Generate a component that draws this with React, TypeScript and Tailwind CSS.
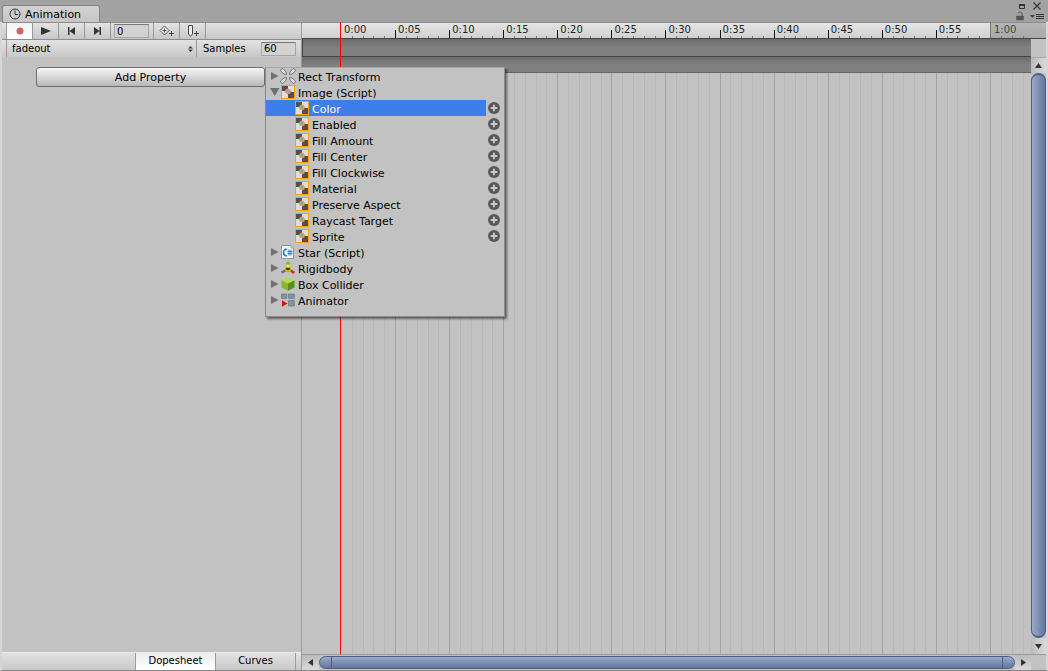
import React from "react";

const SEGMENTS = ["0:00", "0:05", "0:10", "0:15", "0:20", "0:25", "0:30", "0:35", "0:40", "0:45", "0:50", "0:55"];
const IMAGE_PROPERTIES = [
  "Color",
  "Enabled",
  "Fill Amount",
  "Fill Center",
  "Fill Clockwise",
  "Material",
  "Preserve Aspect",
  "Raycast Target",
  "Sprite",
];

const BAR = "bg-linear-to-b from-[#e2e2e2] to-[#c8c8c8]";

function ImageIcon() {
  return (
    <svg className="size-3.5 shrink-0" viewBox="0 0 14 14" aria-hidden="true">
      <path d="M0 0h14v14H0z" fill="#ffa00a" />
      <path d="M1 1h12v12H1z" fill="#dedede" />
      <path d="M1 1h6v5H1zM7 7h6v6H7z" fill="#505050" />
      <circle cx="7" cy="6.500" r="2.400" fill="#a0a0a0" stroke="#f5a01c" strokeWidth="1" />
      <path d="M3.600 6.500h1.200M9.200 6.500h1.200" stroke="#f5a01c" />
    </svg>
  );
}

function RectTransformIcon() {
  const petal = "M0 2.500C0 1 1 0 2.500 0L5.500 3.500 6 6 3.500 5.500Z";
  return (
    <svg className="-ml-px size-4 shrink-0" viewBox="0 0 16 16" fill="#dcdcdc" stroke="#707070" strokeWidth="0.900" aria-hidden="true">
      <path d={petal} transform="translate(.5 .5)" />
      <path d={petal} transform="translate(15.500 .5) scale(-1 1)" />
      <path d={petal} transform="translate(.5 15.500) scale(1 -1)" />
      <path d={petal} transform="translate(15.500 15.500) scale(-1 -1)" />
    </svg>
  );
}

function ScriptIcon() {
  return (
    <svg className="size-3.5 shrink-0" viewBox="0 0 14 14" aria-hidden="true">
      <path d="M.5.5h9.700L12.500 3v10.500H.5z" fill="#f2f5f7" stroke="#8a979f" />
      <path d="M10 .5V3h2.500" fill="#cfd8de" stroke="#8a979f" strokeWidth="0.7" />
      <path d="M6 4.600C3.600 3.600 2.600 5.500 2.600 7.500s1 3.900 3.400 3" fill="none" stroke="#1d7cc0" strokeWidth="1.600" />
      <path d="M8 4.500v6M10 4.500v6M6.500 6.500h5M6.500 8.700h5" fill="none" stroke="#1d7cc0" strokeWidth="0.900" />
    </svg>
  );
}

function RigidbodyIcon() {
  return (
    <svg className="size-3.5 shrink-0" viewBox="0 0 14 14" aria-hidden="true">
      <path d="M4 8.500 0 10.600l1.400 2L5.500 10z" fill="#2674c4" />
      <path d="m10 8.500 4 2.200-1.600 2.200L8.500 10z" fill="#df1f1f" />
      <path d="M5.500 4V2.800H4.600L7 .2l2.400 2.600h-.9V4z" fill="#76b82a" />
      <path d="m7 2.800 4 5.600L8.800 11.200H5.200L3 8.400z" fill="#cbbd00" />
      <path d="M7 5.500 9.700 8.200 7 9.200 4.300 8.200z" fill="#3c3700" />
      <path d="M5 5.500 7 3.300l2 2.200-2 1.500z" fill="#f6ef3d" />
    </svg>
  );
}

function BoxIcon() {
  return (
    <svg className="size-3.5 shrink-0" viewBox="0 0 14 14" aria-hidden="true">
      <path d="m7 .2 6.500 3L7 6.400.5 3.200z" fill="#b5da4e" />
      <path d="M.5 3.200 7 6.400v7.400L.5 10.400z" fill="#8ab62e" />
      <path d="M13.500 3.200 7 6.400v7.400l6.500-3.400z" fill="#5c8f17" />
    </svg>
  );
}

function AnimatorIcon() {
  return (
    <svg className="size-3.5 shrink-0" viewBox="0 0 14 14" aria-hidden="true">
      <g fill="#7f949f" stroke="#6b808c" strokeWidth="0.800">
        <path d="M.5 1h5.300v4.400H.5zM7.500 1h5.800v4.400H7.500zM7.500 7.500h5.800v5.500H7.500z" />
      </g>
      <path d="m1 7.300 5.500 3.200L1 13.700z" fill="#d01414" />
    </svg>
  );
}

function Foldout({ open = false }: { open?: boolean }) {
  return (
    <svg className="size-2.5 shrink-0" viewBox="0 0 10 10" fill="#707070" aria-hidden="true">
      {open ? <path d="M0 1h9.500L4.700 9z" /> : <path d="M1 1 8.500 5 1 9z" />}
    </svg>
  );
}

function TreeRow({ label, open, children }: { label: string; open?: boolean; children: React.ReactNode }) {
  return (
    <button type="button" aria-expanded={!!open} className="flex h-4 w-full items-center pl-1 text-left">
      <Foldout open={open} />
      <span className="flex w-[18px] shrink-0 pl-px">{children}</span>
      <span className="pt-1 whitespace-nowrap">{label}</span>
    </button>
  );
}

function PropertyMenu() {
  return (
    <div className="absolute top-0 left-full z-20 w-[240px] border border-[#8a8a8a] border-t-[#a8a8a8] bg-[#c2c2c2] pb-2 text-[11px] leading-4 shadow-[2px_2px_2px_#00000080]">
      <ul>
        <li>
          <TreeRow label="Rect Transform">
            <RectTransformIcon />
          </TreeRow>
        </li>
        <li>
          <TreeRow label="Image (Script)" open>
            <ImageIcon />
          </TreeRow>
          <ul>
            {IMAGE_PROPERTIES.map((name, i) => (
              <li key={name} className="flex items-center">
                <button
                  type="button"
                  className={`flex h-4 flex-1 items-center gap-[3px] pl-[29px] text-left ${i === 0 ? "bg-[#3d7eea] text-white" : ""}`}
                >
                  <ImageIcon />
                  <span className="pt-1">{name}</span>
                </button>
                <button type="button" aria-label={`Add ${name}`} className="flex h-4 w-[18px] items-center pl-0.5">
                  <svg className="size-3" viewBox="0 0 12 12" aria-hidden="true">
                    <circle cx="6" cy="6" r="6" fill="#585858" />
                    <path d="M6 2.700v6.600M2.700 6h6.600" stroke="#c8c8c8" strokeWidth="2" />
                  </svg>
                </button>
              </li>
            ))}
          </ul>
        </li>
        <li>
          <TreeRow label="Star (Script)">
            <ScriptIcon />
          </TreeRow>
        </li>
        <li>
          <TreeRow label="Rigidbody">
            <RigidbodyIcon />
          </TreeRow>
        </li>
        <li>
          <TreeRow label="Box Collider">
            <BoxIcon />
          </TreeRow>
        </li>
        <li>
          <TreeRow label="Animator">
            <AnimatorIcon />
          </TreeRow>
        </li>
      </ul>
    </div>
  );
}

function TitleBar() {
  return (
    <header className="flex h-[22px] shrink-0 items-end justify-between bg-[#a2a2a2] pr-1">
      <div className="ml-0.5 flex h-[17px] w-[98px] items-center gap-1 rounded-t-[3px] border border-b-0 border-[#858585] bg-linear-to-b from-[#d2d2d2] to-[#c6c6c6] pl-1.5 text-[11px]">
        <svg className="size-3 shrink-0" viewBox="0 0 12 12" fill="none" stroke="#333" aria-hidden="true">
          <circle cx="6" cy="6" r="5" />
          <path d="M6 2.500V6.500h3" />
        </svg>
        <h1 className="pt-0.5">Animation</h1>
      </div>
      <div className="flex flex-col items-end">
        <div className="flex items-center gap-[7px] pr-0.5">
          <button type="button" aria-label="Maximize">
            <svg className="block h-2.5 w-1.5" viewBox="0 0 6 10" aria-hidden="true">
              <path d="M.5 3.500h5v4h-5z" fill="none" stroke="#333" />
              <path d="M0 3h6v2H0z" fill="#333" />
            </svg>
          </button>
          <button type="button" aria-label="Close">
            <svg className="block size-2.5" viewBox="0 0 10 10" stroke="#333" strokeWidth="1.100" aria-hidden="true">
              <path d="m1.500 1.500 7 7M8.500 1.500l-7 7" />
            </svg>
          </button>
        </div>
        <div className="flex items-center gap-1.5 pb-px">
          <button type="button" aria-label="Lock">
            <svg className="block h-2.5 w-2" viewBox="0 0 8 10" aria-hidden="true">
              <path d="M.5 5h7v4h-7z" fill="#555" stroke="#555" strokeWidth="0.500" />
              <path d="M6 5V2.600C6 1.500 5 1 4 1S2 1.700 2 2.500" fill="none" stroke="#555" />
            </svg>
          </button>
          <button type="button" aria-label="Options">
            <svg className="block h-2.5 w-3.5" viewBox="0 0 14 10" aria-hidden="true">
              <path d="M0 4h5L2.500 7z" fill="#444" />
              <path d="M6 3.500h8M6 5.500h8M6 7.500h8" stroke="#333" />
            </svg>
          </button>
        </div>
      </div>
    </header>
  );
}

function ToolButton({ label, active, children }: { label: string; active?: boolean; children: React.ReactNode }) {
  return (
    <button
      type="button"
      aria-label={label}
      className={`flex h-full w-[26px] items-center justify-center border-r border-[#999] ${active ? "bg-linear-to-b from-[#f2f2f2] to-white" : ""}`}
    >
      {children}
    </button>
  );
}

const FIELD = "border border-[#a5a5a5] border-t-[#777] bg-[#d2d2d2] px-0.5 text-[10px] leading-3 outline-none";

function LeftPanel() {
  return (
    <section className="flex w-[300px] shrink-0 flex-col border-r border-[#999] bg-[#c2c2c2]">
      <div className={`flex h-[17px] border-t border-[#8d8d8d] pl-1 ${BAR}`}>
        <div className="flex border-l border-[#999]">
          <ToolButton label="Record" active>
            <svg className="size-2" viewBox="0 0 8 8" aria-hidden="true">
              <circle cx="4" cy="4" r="3.500" fill="#cf6262" />
            </svg>
          </ToolButton>
          <ToolButton label="Play">
            <svg className="h-2 w-2.5" viewBox="0 0 10 8" aria-hidden="true">
              <path d="M0 0 10 4 0 8z" fill="#333" />
            </svg>
          </ToolButton>
          <ToolButton label="Previous keyframe">
            <svg className="size-2" viewBox="0 0 8 8" fill="#333" aria-hidden="true">
              <path d="M0 0h1.500v8H0zM7 0v8L1.500 4z" />
            </svg>
          </ToolButton>
          <ToolButton label="Next keyframe">
            <svg className="size-2" viewBox="0 0 8 8" fill="#333" aria-hidden="true">
              <path d="M5.500 0H7v8H5.500zM0 0v8l5.500-4z" />
            </svg>
          </ToolButton>
        </div>
        <div className="flex items-center border-r border-[#999] pr-1 pl-[3px]">
          <input aria-label="Current frame" defaultValue="0" className={`h-3.5 w-[35px] ${FIELD}`} />
        </div>
        <ToolButton label="Add keyframe">
          <svg className="h-3 w-4" viewBox="0 0 16 12" fill="none" stroke="#444" aria-hidden="true">
            <path d="M5.500 1 10 5.500 5.500 10 1 5.500z" fill="#eee" strokeWidth="0.900" />
            <path d="M5.500 3.500v4M3.500 5.500h4" strokeWidth="0.900" />
            <path d="M12.500 6v5M10 8.500h5" />
          </svg>
        </ToolButton>
        <ToolButton label="Add event">
          <svg className="h-3 w-3" viewBox="0 0 12 12" fill="none" stroke="#444" aria-hidden="true">
            <path d="M1.500.5h4V9l-2 2.300-2-2.300z" fill="#eee" />
            <path d="M9.500 6v5M7 8.500h5" />
          </svg>
        </ToolButton>
      </div>

      <div className={`flex h-[18px] items-center border-t border-[#8d8d8d] pr-[5px] pl-1 text-[10px] ${BAR}`}>
        <button type="button" aria-haspopup="listbox" className="flex h-full flex-1 items-center justify-between border-x border-[#999] pr-[3px] pl-[5px]">
          fadeout
          <svg className="h-1.5 w-[5px]" viewBox="0 0 5 6" fill="#444" aria-hidden="true">
            <path d="M2.500 0 5 2.500H0zM0 3.500h5L2.500 6z" />
          </svg>
        </button>
        <label htmlFor="samples" className="w-16 pl-1.5">
          Samples
        </label>
        <input id="samples" defaultValue="60" className={`h-3.5 w-[35px] ${FIELD}`} />
      </div>

      <div className="flex-1 pt-2.5 pr-9 pl-[34px]">
        <div className="relative">
          <button
            type="button"
            className="block h-5 w-full rounded-[3px] border border-[#6f6f6f] bg-linear-to-b from-[#f6f6f6] to-[#b9b9b9] pt-0.5 text-[11px] leading-4"
          >
            Add Property
          </button>
          <PropertyMenu />
        </div>
      </div>

      <div role="tablist" className={`flex h-[18px] justify-end border-t border-[#ececec] pr-[5px] text-[10px] ${BAR}`}>
        <button type="button" role="tab" aria-selected="true" className="w-20 border-l border-[#999] bg-linear-to-b from-[#ececec] to-white pb-0.5 leading-3">
          Dopesheet
        </button>
        <button type="button" role="tab" aria-selected="false" className="w-[81px] border-x border-[#999] pb-0.5 leading-3">
          Curves
        </button>
      </div>
    </section>
  );
}

function Ruler() {
  return (
    <div className="flex h-[17px] shrink-0 border-y border-t-[#8d8d8d] border-b-[#444] bg-linear-to-b from-[#e4e4e4] to-[#d0d0d0] text-[10px] leading-[14px] text-[#222]">
      <div className="w-[39px]" />
      {SEGMENTS.map((time, i) => (
        <div key={time} className="flex min-w-0 flex-1 flex-col justify-between">
          <span className="-mb-2 pl-[3px]">{time}</span>
          <div className="grid h-2 grid-cols-5 items-end">
            <i className={`h-2 border-l ${i === 0 ? "border-transparent" : "border-[#111]"}`} />
            <i className="h-0.5 border-l border-[#777]" />
            <i className="h-0.5 border-l border-[#777]" />
            <i className="h-0.5 border-l border-[#777]" />
            <i className="h-0.5 border-l border-[#777]" />
          </div>
        </div>
      ))}
      <div className="flex w-14 flex-col justify-between border-l border-[#777] bg-linear-to-b from-[#b6b6b6] to-[#a8a8a8] text-[#444]">
        <span className="-mb-2 pl-[3px]">1:00</span>
        <div className="flex h-0.5 pl-2.5">
          <i className="w-[11px] border-l border-[#777]" />
          <i className="w-[11px] border-l border-[#777]" />
          <i className="w-[11px] border-l border-[#777]" />
        </div>
      </div>
    </div>
  );
}

function FrameGrid() {
  return (
    <div className="flex flex-1 bg-[#c2c2c2]">
      <div className="w-[39px]" />
      {SEGMENTS.map((time, i) => (
        <div key={time} className="grid min-w-0 flex-1 grid-cols-5">
          <i className={`border-l ${i === 0 ? "border-transparent" : "border-[#a3a3a3]"}`} />
          <i className="border-l border-[#b8b8b8]" />
          <i className="border-l border-[#b8b8b8]" />
          <i className="border-l border-[#b8b8b8]" />
          <i className="border-l border-[#b8b8b8]" />
        </div>
      ))}
      <div className="flex w-[41px] border-l border-[#a3a3a3] pl-2.5">
        <i className="w-[11px] border-l border-[#b8b8b8]" />
        <i className="w-[11px] border-l border-[#b8b8b8]" />
        <i className="w-[8px] border-l border-[#b8b8b8]" />
      </div>
    </div>
  );
}

function ArrowButton({ label, path, className }: { label: string; path: string; className: string }) {
  return (
    <button type="button" aria-label={label} className={`flex shrink-0 items-center justify-center ${className}`}>
      <svg className="size-[7px]" viewBox="0 0 7 7" fill="#333" aria-hidden="true">
        <path d={path} />
      </svg>
    </button>
  );
}

function Timeline() {
  return (
    <section className="relative flex min-w-0 flex-1 flex-col">
      <Ruler />
      <div className="flex min-h-0 flex-1">
        <div id="tracks" className="flex min-w-0 flex-1 flex-col">
          <div className="h-[18px] border-b border-l border-[#444] bg-linear-to-b from-[#6c6c6c] to-[#808080] to-50%" />
          <div className="h-4 border-b border-[#666] bg-linear-to-b from-[#6c6c6c] to-[#808080] to-50%" />
          <FrameGrid />
        </div>
        <div className="flex w-[15px] flex-col bg-[#c2c2c2] pt-[18px]">
          <ArrowButton label="Scroll up" path="M3.500 1 7 6H0z" className="h-4 border-t border-[#aaa] bg-linear-to-r from-[#bbb] to-[#dadada]" />
          <div role="scrollbar" aria-label="Vertical scroll" aria-controls="tracks" aria-orientation="vertical" aria-valuenow={0} className="flex-1 rounded-full border-2 border-x border-[#4d5f86] bg-linear-to-r from-[#9aabcb] to-[#62759c]" />
          <ArrowButton label="Scroll down" path="M0 1h7L3.500 6z" className="h-4 bg-linear-to-r from-[#bbb] to-[#dadada]" />
        </div>
      </div>
      <div className="flex h-4 border-t border-[#999] bg-[#c2c2c2] pr-[15px]">
        <ArrowButton label="Scroll left" path="M6 0v7L1 3.500z" className="w-[17px] bg-linear-to-b from-[#bbb] to-[#dadada]" />
        <div role="scrollbar" aria-label="Horizontal scroll" aria-controls="tracks" aria-orientation="horizontal" aria-valuenow={0} className="my-px flex flex-1 justify-between rounded-full border border-[#4d5f86] bg-linear-to-b from-[#9aabcb] to-[#62759c] px-[11px]">
          <i className="border-l border-[#4d5f86]" />
          <i className="border-l border-[#4d5f86]" />
        </div>
        <ArrowButton label="Scroll right" path="M1 0v7l5-3.500z" className="w-4 bg-linear-to-b from-[#bbb] to-[#dadada]" />
      </div>
      <div className="absolute top-0 bottom-4 left-[38px] w-px bg-[#ff0000]" />
    </section>
  );
}

export default function App() {
  return (
    <main className="flex h-screen flex-col bg-[#c2c2c2] font-['DejaVu_Sans',Verdana,sans-serif] text-black">
      <TitleBar />
      <div className="flex min-h-0 flex-1 border-x-2 border-b border-x-[#d6d6d6] border-b-[#858585]">
        <LeftPanel />
        <Timeline />
      </div>
    </main>
  );
}
